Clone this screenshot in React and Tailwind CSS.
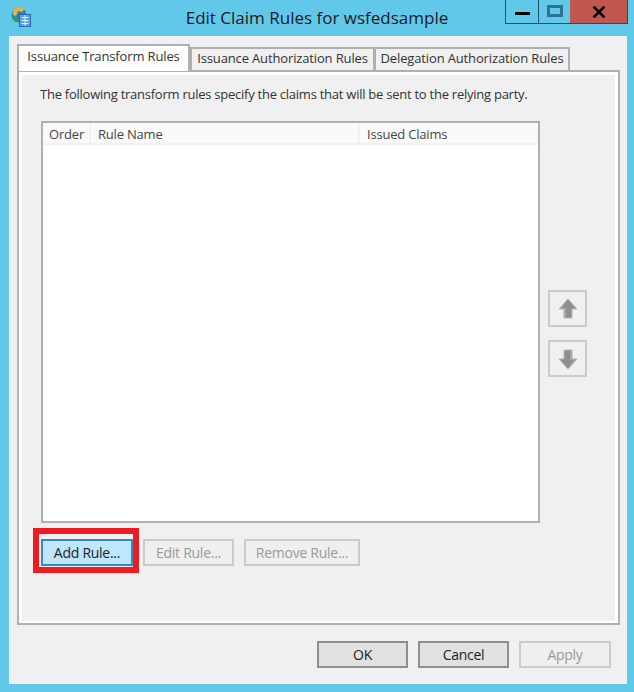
const font = "font-['Open_Sans','Noto_Sans',sans-serif]";

function GrayArrow({ down }) {
  return (
    <svg width="22" height="24" viewBox="0 0 22 24" className={down ? "rotate-180" : ""}>
      <path d="M11 2 L20 12 L15 12 L15 21 L7 21 L7 12 L2 12 Z" fill="#8f8f8f" stroke="#b5b5b5" strokeWidth="1" />
      <path d="M11 4 L5 11 L9 11 L9 20 L7.5 20 L7.5 11.5 L3.5 11.5 Z" fill="#a9a9a9" />
    </svg>
  );
}

function AppIcon() {
  return (
    <svg width="21" height="24" viewBox="0 0 21 24">
      <circle cx="8" cy="10" r="7.5" fill="#2f7fb5" />
      <path d="M2 6 C4 2 10 1 14 3 L11 7 L7 6 L5 11 L2 10 Z" fill="#e3b53f" />
      <path d="M1 12 L5 11 L7 15 L5 17 C3 16 1 14 1 12 Z" fill="#3f9a56" />
      <rect x="8.5" y="9.5" width="11" height="12" fill="#5aa2e0" stroke="#2a6cab" />
      <path d="M10.5 12.5 H17.5 M10.5 15.5 H17.5 M10.5 18.5 H17.5 M14 10 V21" stroke="#d8ecfa" strokeWidth="1" />
    </svg>
  );
}

function Tab({ label, w }) {
  return (
    <div className={`${w} h-[23px] mt-[3px] bg-[#f0f0f0] border-2 border-b-0 border-[#b0b0b0] text-[13px] tracking-[-0.14px] leading-[19px] text-[#333] text-center -mr-[1px] whitespace-nowrap`}>
      {label}
    </div>
  );
}

function Btn({ label, w = "w-[91px]", off, cls = "" }) {
  return (
    <button
      className={`${w} h-[27px] border-2 text-[14px] tracking-[-0.27px] leading-none ${off ? "border-[#cbcbcb] bg-[#efefef] text-[#9a9a9a]" : "border-[#8e8e8e] bg-[#e1e1e1] text-[#222]"} ${cls}`}
    >
      {label}
    </button>
  );
}

export default function App() {
  return (
    <div className={`${font} w-[634px] h-[692px] bg-[#62c8ea] flex flex-col overflow-hidden`}>
      {/* title bar */}
      <div className="h-[36px] flex items-start">
        <div className="w-[11px]" />
        <div className="mt-[5px]">
          <AppIcon />
        </div>
        <div className="w-[473px] mt-[6px] pl-[97px] text-center text-[17px] leading-[24px] text-[#1a1a1a] whitespace-nowrap">
          Edit Claim Rules for wsfedsample
        </div>
        <div className="flex h-[24px] border border-t-0 border-[#1d4f68]">
          <div className="w-[33px] flex items-center justify-center border-r border-[#1d4f68]">
            <div className="w-[15px] h-[3px] mt-[3px] bg-black" />
          </div>
          <div className="w-[31px] flex justify-center pt-[5px]">
            <div className="w-[16px] h-[12px] border-[3px] border-[#2f728f]" />
          </div>
          <div className="w-[57px] bg-[#c1574f] flex items-center justify-center">
            <svg width="14" height="12" viewBox="0 0 14 12">
              <path d="M1.5 0.5 L12.5 11.5 M12.5 0.5 L1.5 11.5" stroke="#000" strokeWidth="2.6" />
            </svg>
          </div>
        </div>
      </div>

      {/* client area */}
      <div className="relative ml-[9px] w-[618px] h-[648px] bg-[#f0f0f0] pl-[8px] pt-[8px]">
        {/* tabs */}
        <div className="flex h-[26px] relative z-10">
          <div className="w-[173px] h-[27px] bg-white border-2 border-b-0 border-[#b0b0b0] text-[13px] tracking-[-0.14px] leading-[21px] text-[#333] text-center whitespace-nowrap">
            Issuance Transform Rules
          </div>
          <Tab label="Issuance Authorization Rules" w="w-[185px]" />
          <Tab label="Delegation Authorization Rules" w="w-[196px]" />
        </div>

        {/* panel */}
        <div className="w-[603px] h-[555px] border-2 border-[#b0b0b0] bg-white p-[3px]">
          <div className="w-[593px] h-[546px] bg-[#f0f0f0] pt-[9px] pl-[18px]">
            <p className="text-[13px] tracking-[-0.25px] leading-[20px] text-[#333] whitespace-nowrap">
              The following transform rules specify the claims that will be sent to the relying party.
            </p>

            <div className="flex mt-[17px] ml-[1px]">
              <div className="w-[499px] h-[402px] border-2 border-[#b0b0b0] bg-white">
                <div className="flex h-[22px] text-[13px] tracking-[-0.2px] leading-[22px] text-[#444] border-b-2 border-[#f1f1f1]">
                  <div className="w-[48px] pl-[6px] border-r-2 border-[#f1f1f1] bg-[#fafafa]">Order</div>
                  <div className="w-[269px] pl-[7px] border-r-2 border-[#f1f1f1] bg-[#fafafa]">Rule Name</div>
                  <div className="flex-1 pl-[7px] bg-[#fafafa]">Issued Claims</div>
                </div>
              </div>
              <div className="ml-[8px] pt-[169px] flex flex-col gap-[13px]">
                <div className="w-[39px] h-[37px] border-2 border-[#cbcbcb] bg-[#f0f0f0] flex items-center justify-center">
                  <GrayArrow />
                </div>
                <div className="w-[39px] h-[37px] border-2 border-[#cbcbcb] bg-[#f0f0f0] flex items-center justify-center">
                  <GrayArrow down />
                </div>
              </div>
            </div>

            <div className="flex mt-[16px] ml-[1px]">
              <div className="relative">
                <Btn label="Add Rule..." w="w-[92px]" cls="!border-[#3a87bf] !bg-[#bee6fd]" />
                <div className="absolute left-[-8px] top-[-11px] w-[106px] h-[45px] border-[6px] border-[#ed1c24]" />
              </div>
              <Btn label="Edit Rule..." w="w-[91px]" off cls="ml-[10px]" />
              <Btn label="Remove Rule..." w="w-[116px]" off cls="ml-[10px]" />
            </div>
          </div>
        </div>

        {/* dialog buttons */}
        <div className="flex mt-[16px] ml-[300px] gap-[10px]">
          <Btn label="OK" />
          <Btn label="Cancel" />
          <Btn label="Apply" w="w-[92px]" off />
        </div>
      </div>
    </div>
  );
}
